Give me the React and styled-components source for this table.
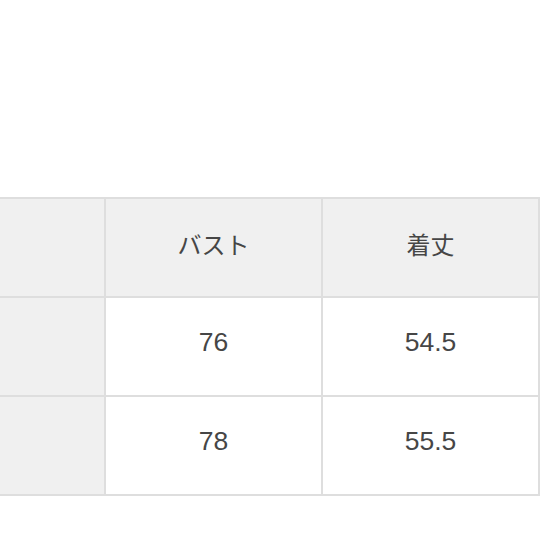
import React from 'react';
import styled, { createGlobalStyle } from 'styled-components';

const GlobalStyle = createGlobalStyle`
  html, body {
    margin: 0;
    padding: 0;
    background: #ffffff;
  }
  body {
    font-family: "Liberation Sans", "Noto Sans CJK JP", sans-serif;
  }
`

const StyledPage = styled.div`
  width: 543px;
  height: 543px;
  overflow: hidden;
  padding-top: 197px;
  box-sizing: border-box;
`
StyledPage.displayName = 'StyledPage'

const StyledTable = styled.div`
  display: grid;
  grid-template-columns: 104px 215px 215px;
  grid-auto-rows: 97px;
  gap: 2px;
  padding: 2px;
  margin-left: -2px;
  width: max-content;
  background: #dedede;
`
StyledTable.displayName = 'StyledTable'

const StyledCell = styled.div`
  display: flex;
  align-items: center;
  justify-content: center;
  padding-bottom: 8px;
  box-sizing: border-box;
  background: ${props => (props.$shaded ? '#f0f0f0' : '#ffffff')};
  color: #464646;
  font-size: ${props => (props.$jp ? '24px' : '26.5px')};
  font-family: ${props => (props.$jp
    ? '"Noto Sans CJK JP", sans-serif'
    : '"Liberation Sans", "Noto Sans CJK JP", sans-serif')};
`
StyledCell.displayName = 'StyledCell'

const rows = [
  ['76', '54.5'],
  ['78', '55.5'],
];

const App = () => (
  <>
    <GlobalStyle />
    <StyledPage>
      <StyledTable>
        <StyledCell $shaded />
        <StyledCell $shaded $jp>バスト</StyledCell>
        <StyledCell $shaded $jp>着丈</StyledCell>
        {rows.map((row, i) => (
          <React.Fragment key={i}>
            <StyledCell $shaded />
            {row.map(value => (
              <StyledCell key={value}>{value}</StyledCell>
            ))}
          </React.Fragment>
        ))}
      </StyledTable>
    </StyledPage>
  </>
);

export default App;
